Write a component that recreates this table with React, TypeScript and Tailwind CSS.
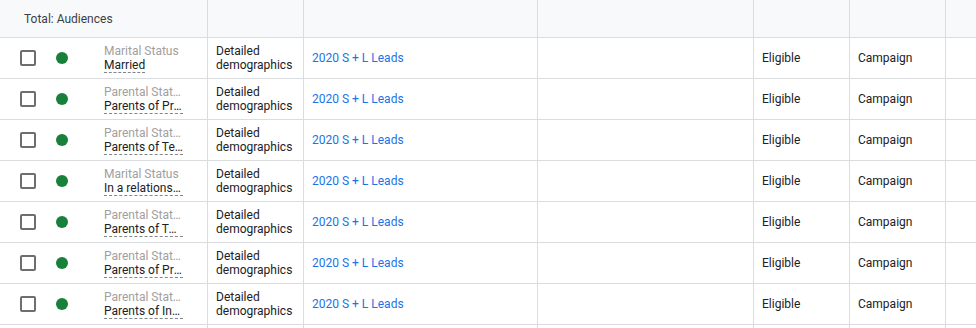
const rows = [
  { label: "Marital Status", value: "Married" },
  { label: "Parental Status", value: "Parents of Preschoolers" },
  { label: "Parental Status", value: "Parents of Teens" },
  { label: "Marital Status", value: "In a relationship" },
  { label: "Parental Status", value: "Parents of Toddlers" },
  { label: "Parental Status", value: "Parents of Primary Schoolers" },
  { label: "Parental Status", value: "Parents of Infants" },
  { label: "Parental Status", value: "Parents of Grade Schoolers" },
];

const cols = "grid grid-cols-[208px_96px_234px_216px_96px_96px_1fr]";
const cell = "border-r border-[#dadce0]";

export default function App() {
  return (
    <div
      className="w-[976px] h-[328px] overflow-hidden bg-white text-[12px] text-[#202124]"
      style={{ fontFamily: "Roboto, 'Liberation Sans', sans-serif" }}
    >
      <div className={`${cols} h-[38px] bg-[#f8f9fa] border-b border-[#dadce0]`}>
        <div className={`${cell} flex items-center pl-6 text-[#3c4043]`}>
          Total: Audiences
        </div>
        <div className={cell} />
        <div className={cell} />
        <div className={cell} />
        <div className={cell} />
        <div className={cell} />
        <div />
      </div>

      {rows.map((r, i) => (
        <div key={i} className={`${cols} h-[41px] border-b border-[#dadce0]`}>
          <div className={`${cell} flex items-center`}>
            <span className="ml-5 w-4 h-4 rounded-[2px] border-2 border-[#6e6e6e]" />
            <span className="ml-5 w-3 h-3 rounded-full bg-[#188038]" />
            <div className="ml-9 w-[79px] flex flex-col leading-[14px]">
              <span className="truncate text-[#a0a0a0]">{r.label}</span>
              <span className="self-start max-w-full truncate border-b border-dashed border-[#80868b]">
                {r.value}
              </span>
            </div>
          </div>
          <div className={`${cell} flex flex-col justify-center pl-2 leading-[14px]`}>
            <span>Detailed</span>
            <span>demographics</span>
          </div>
          <div className={`${cell} flex items-center pl-2 text-[#1a73e8]`}>
            2020 S + L Leads
          </div>
          <div className={cell} />
          <div className={`${cell} flex items-center pl-2`}>Eligible</div>
          <div className={`${cell} flex items-center pl-2`}>Campaign</div>
          <div />
        </div>
      ))}
    </div>
  );
}
